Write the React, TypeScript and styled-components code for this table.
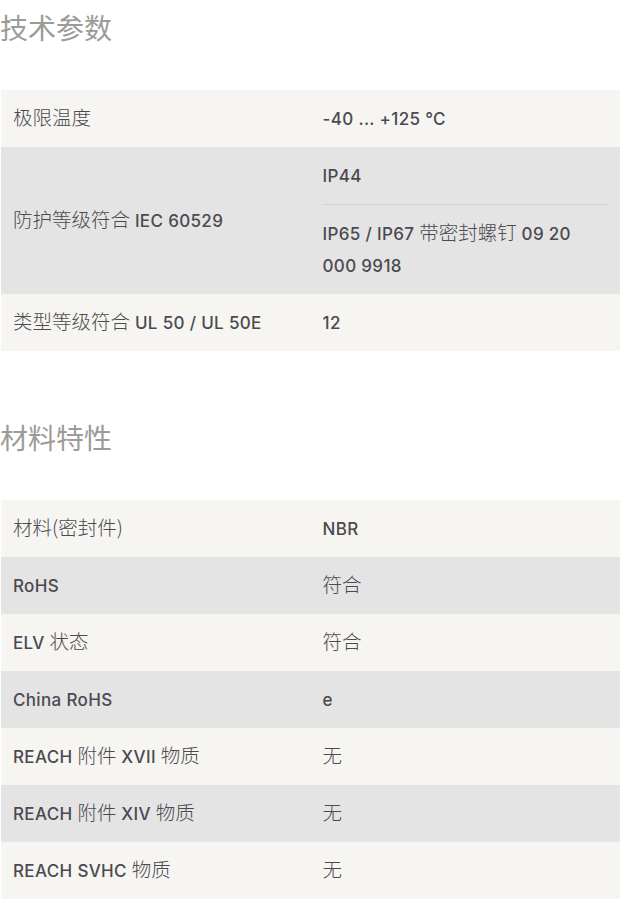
import styled, { createGlobalStyle } from "styled-components";

const GlobalStyle = createGlobalStyle`
  html, body {
    margin: 0;
    padding: 0;
    background: #fff;
  }
  body {
    font-family: Inter, "Noto Sans CJK SC", sans-serif;
    color: #4b4a50;
  }
`;

type Row = { label: string; values: string[] };

const sections: { title: string; rows: Row[] }[] = [
  {
    title: "技术参数",
    rows: [
      { label: "极限温度", values: ["-40 ... +125 °C"] },
      { label: "防护等级符合 IEC 60529", values: ["IP44", "IP65 / IP67 带密封螺钉 09 20 000 9918"] },
      { label: "类型等级符合 UL 50 / UL 50E", values: ["12"] },
    ],
  },
  {
    title: "材料特性",
    rows: [
      { label: "材料(密封件)", values: ["NBR"] },
      { label: "RoHS", values: ["符合"] },
      { label: "ELV 状态", values: ["符合"] },
      { label: "China RoHS", values: ["e"] },
      { label: "REACH 附件 XVII 物质", values: ["无"] },
      { label: "REACH 附件 XIV 物质", values: ["无"] },
      { label: "REACH SVHC 物质", values: ["无"] },
    ],
  },
];

// latin runs are set a bit heavier than the CJK runs, as on the original page
function Mixed({ text }: { text: string }) {
  const parts = text.split(/([\u3400-\u9fff()]+)/).filter(p => p !== "");
  return (
    <>
      {parts.map((p, i) =>
        /[\u3400-\u9fff]/.test(p) ? <Cjk key={i}>{p}</Cjk> : <Latin key={i}>{p}</Latin>
      )}
    </>
  );
}

export default function App() {
  return (
    <Page>
      <GlobalStyle />
      {sections.map(s => (
        <Section key={s.title}>
          <Heading>{s.title}</Heading>
          <Table>
            <tbody>
              {s.rows.map((r, i) => (
                <TableRow key={r.label} $odd={i % 2 === 1}>
                  <Cell>
                    <Mixed text={r.label} />
                  </Cell>
                  <ValueCell>
                    {r.values.map(v => (
                      <Value key={v}>
                        <Mixed text={v} />
                      </Value>
                    ))}
                  </ValueCell>
                </TableRow>
              ))}
            </tbody>
          </Table>
        </Section>
      ))}
    </Page>
  );
}

const Page = styled.main`
  padding: 0 1px;
  width: 619px;
`;

const Section = styled.section`
  padding-top: 9px;
  margin-bottom: 59px;

  &:last-child {
    margin-bottom: 0;
  }
`;

const Heading = styled.h2`
  margin: 0 0 45px -1px;
  font-family: "Noto Sans CJK SC", sans-serif;
  font-size: 28px;
  line-height: 36px;
  font-weight: 400;
  color: #9c9b97;
`;

const Table = styled.table`
  width: 100%;
  border-collapse: collapse;
  table-layout: fixed;
`;

const TableRow = styled.tr<{ $odd: boolean }>`
  background: ${p => (p.$odd ? "#e4e4e4" : "#f6f5f2")};
`;

const Cell = styled.td`
  padding: 13px 12px 12px;
  vertical-align: middle;
  font-size: 17px;
  line-height: 32px;
  height: 32px;
`;

const ValueCell = styled(Cell)`
  padding: 0 12px;
`;

const Value = styled.div`
  padding: 13px 0 12px;

  & + & {
    border-top: 1px solid #d2d2d2;
  }
`;

const Latin = styled.span`
  font-family: Inter, sans-serif;
  font-weight: 500;
  font-size: 17px;
  line-height: 1;
  letter-spacing: 0.02em;
`;

const Cjk = styled.span`
  font-family: "Noto Sans CJK SC", sans-serif;
  font-weight: 300;
  font-size: 19.5px;
  line-height: 1;
`;
